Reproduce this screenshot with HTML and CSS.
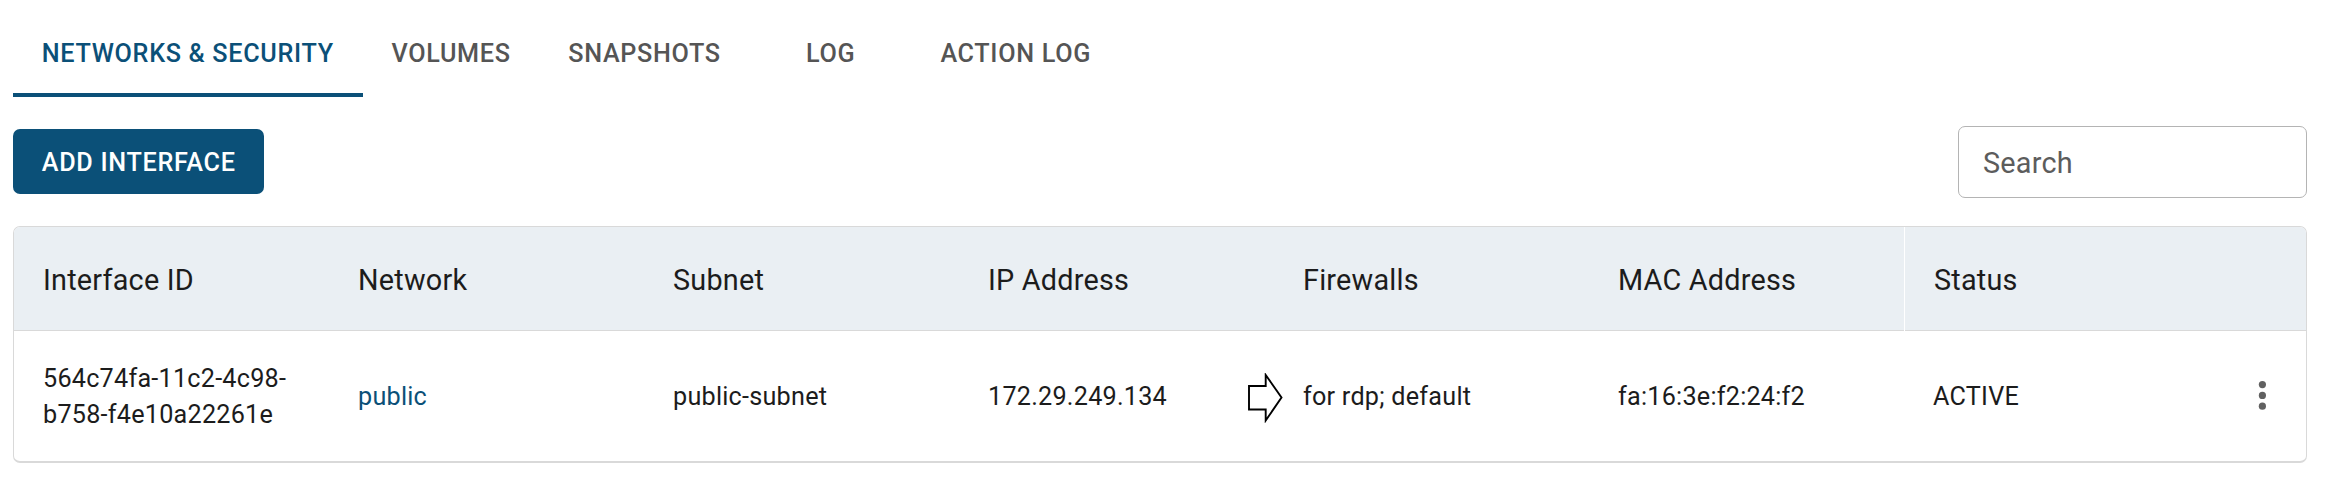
FILE: index.html
```html
<!DOCTYPE html>
<html lang="en">
<head>
<meta charset="utf-8">
<title>Networks &amp; Security</title>
<link rel="stylesheet" href="styles.css">
</head>
<body>
<nav class="tabs">
  <a class="tab tab-active">NETWORKS &amp; SECURITY</a>
  <a class="tab">VOLUMES</a>
  <a class="tab">SNAPSHOTS</a>
  <a class="tab">LOG</a>
  <a class="tab">ACTION LOG</a>
</nav>
<div class="toolbar">
  <button class="add" type="button">ADD INTERFACE</button>
  <input class="search" type="text" placeholder="Search">
</div>
<div class="table">
  <div class="row head">
    <div class="cell">Interface ID</div>
    <div class="cell">Network</div>
    <div class="cell">Subnet</div>
    <div class="cell">IP Address</div>
    <div class="cell">Firewalls</div>
    <div class="cell">MAC Address</div>
    <div class="cell status">Status</div>
  </div>
  <div class="row body">
    <div class="cell">564c74fa-11c2-4c98-<br>b758-f4e10a22261e</div>
    <div class="cell"><a class="link">public</a></div>
    <div class="cell">public-subnet</div>
    <div class="cell">172.29.249.134</div>
    <div class="cell firewalls">
      <svg class="arrow" width="36" height="50" viewBox="0 0 36 50"><path d="M2 13H18.7V2L34.5 24.5L18.7 47.5V36.5H2Z" fill="#fff" stroke="#000" stroke-width="1.9"/></svg>
      for rdp; default
    </div>
    <div class="cell">fa:16:3e:f2:24:f2</div>
    <div class="cell status">
      <span>ACTIVE</span>
      <svg class="more" width="8" height="30" viewBox="0 0 8 30" fill="#616161"><circle cx="4.4" cy="2.6" r="3.6"/><circle cx="4.4" cy="13.4" r="3.6"/><circle cx="4.4" cy="24.2" r="3.6"/></svg>
    </div>
  </div>
</div>
</body>
</html>
```
FILE: styles.css
```css
* { box-sizing: border-box; }
body {
  margin: 0;
  padding: 11px 21px 0 13px;
  background: #fff;
  color: #1c1c1c;
  font-family: Roboto, "Liberation Sans", sans-serif;
}
.tabs { display: flex; height: 86px; }
.tab {
  display: flex;
  align-items: center;
  justify-content: center;
  min-width: 162px;
  padding: 3px 28.8px 0;
  border-bottom: 4px solid transparent;
  font-size: 25.2px;
  font-weight: 500;
  letter-spacing: 0.68px;
  line-height: 36px;
  color: #555;
  white-space: nowrap;
}
.tab-active { color: #0b5078; border-bottom-color: #0b5078; }
.toolbar {
  display: flex;
  justify-content: space-between;
  align-items: flex-start;
  height: 72px;
  margin-top: 29px;
}
.add {
  height: 65px;
  margin-top: 3px;
  padding: 1px 28.8px 0;
  border: 0;
  border-radius: 7px;
  background: #0b5078;
  color: #fff;
  font: 500 25.2px Roboto, sans-serif;
  letter-spacing: 0.69px;
}
.search {
  width: 349px;
  height: 72px;
  padding: 1px 24px 0;
  border: 1px solid #b4b4b4;
  border-radius: 7px;
  background: #fff;
  font: 28.8px Roboto, sans-serif;
  letter-spacing: 0.24px;
}
.search::placeholder { color: #5c5c5c; opacity: 1; }
.table {
  margin-top: 28px;
  border: 1px solid #d9d9d9;
  border-bottom-width: 2px;
  border-radius: 7px;
  overflow: hidden;
}
.row { display: grid; grid-template-columns: repeat(6, 315px) 1fr; }
.cell { display: flex; align-items: center; padding-left: 29px; padding-top: 2px; }
.head {
  height: 104px;
  background: #eaeff3;
  border-bottom: 1px solid #d9d9d9;
  font-size: 28.8px;
  letter-spacing: 0.22px;
}
.head .status { border-left: 1px solid #fff; margin-bottom: -1px; padding-bottom: 1px; }
.body { height: 130px; font-size: 25.2px; line-height: 36px; letter-spacing: 0.24px; }
.link { color: #0b5078; }
.firewalls { position: relative; }
.arrow { position: absolute; left: -27px; top: 42px; }
.more { overflow: visible; }
.status { justify-content: space-between; padding-right: 40px; }
```
